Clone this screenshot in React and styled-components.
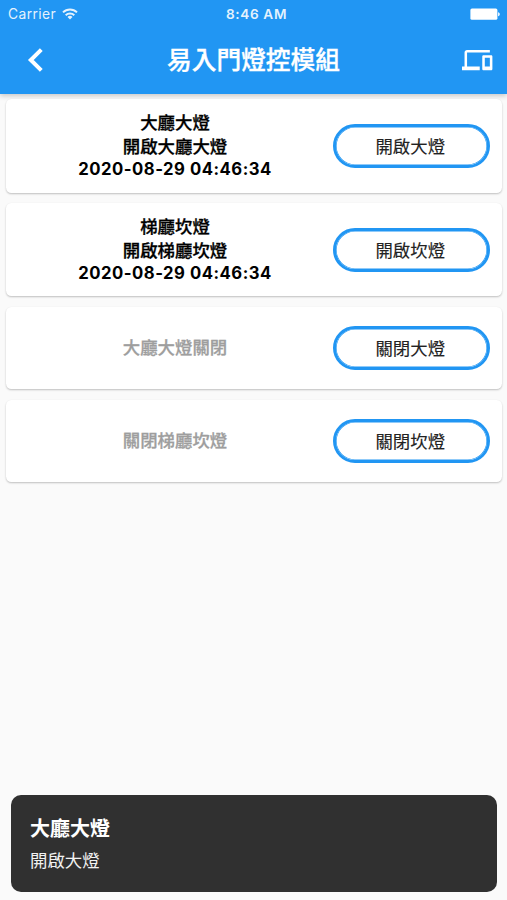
import * as React from "react";
import styled, { createGlobalStyle } from "styled-components";

const BLUE = "#2196f3";

const GlobalStyle = createGlobalStyle`
    body {
        margin: 0;
        background: #fafafa;
        font-family: Inter, "Noto Sans CJK TC", sans-serif;
    }
`;

const Screen = styled.div`
    display: flex;
    flex-direction: column;
    height: 900px;
    box-sizing: border-box;
    overflow: hidden;
`;

const Header = styled.header`
    flex: none;
    height: 93.5px;
    color: #fff;
    background: ${BLUE};
    box-shadow: 0 2px 5px rgba(0, 0, 0, 0.2);
`;

const StatusBar = styled.div`
    display: grid;
    grid-template-columns: 1fr auto 1fr;
    align-items: center;
    height: 27px;
    padding: 0 7px 0 8px;
`;

const Carrier = styled.div`
    display: flex;
    align-items: center;
    gap: 5.5px;
    font-size: 13.8px;
    letter-spacing: 0.4px;
    opacity: 0.88;
`;

const Clock = styled.div`
    margin-left: 5px;
    font-size: 13.6px;
    font-weight: 600;
    letter-spacing: 0.65px;
    opacity: 0.88;
`;

const BatterySlot = styled.div`
    display: flex;
    justify-content: flex-end;
`;

const NavBar = styled.div`
    display: grid;
    grid-template-columns: 60px 1fr 60px;
    align-items: center;
    height: 66px;
`;

const NavButton = styled.button`
    display: flex;
    justify-content: ${props => props.$end ? 'flex-end' : 'flex-start'};
    border: 0;
    padding: ${props => props.$end ? '0 14.5px 0 0' : '0 0 0 27px'};
    color: inherit;
    background: none;
`;

/*the CJK face has no medium weight, a thin stroke stands in for it*/
const Title = styled.h1`
    margin: 0;
    text-align: center;
    font-size: 24.7px;
    line-height: 34px;
    font-weight: 500;
    -webkit-text-stroke: 0.35px currentColor;
    white-space: nowrap;
`;

const List = styled.main`
    flex: 1;
    display: flex;
    flex-direction: column;
    gap: 10.4px;
    padding: 5.8px 5px 0 6px;
`;

const Card = styled.section`
    display: flex;
    align-items: center;
    gap: 5.5px;
    height: ${props => props.$tall ? '93.4px' : '82.4px'};
    box-sizing: border-box;
    padding: 0 12px 0 17px;
    border-radius: 5.4px;
    background: #fff;
    box-shadow: 0 1px 2px rgba(0, 0, 0, 0.24);
`;

const Info = styled.div`
    flex: 1;
    text-align: center;
    font-size: 17.4px;
    font-weight: 500;
    line-height: 24px;
    color: ${props => props.$muted ? '#9e9e9e' : '#000'};
    -webkit-text-stroke: 0.3px currentColor;
`;

const Stamp = styled.div`
    font-size: 16.7px;
    font-weight: 700;
    line-height: 21px;
    letter-spacing: 0.5px;
    -webkit-text-stroke: 0;
`;

const ActionButton = styled.button`
    flex: none;
    width: 157.5px;
    height: 44px;
    border: 3px solid ${BLUE};
    border-radius: 22px;
    padding: 0 2px 1px 0;
    font: inherit;
    font-size: 17.4px;
    color: #222;
    background: #fff;
    box-shadow: inset 0 0 0 0.6px ${BLUE};
    -webkit-text-stroke: 0.15px currentColor;
`;

const Toast = styled.div`
    flex: none;
    height: 97.5px;
    box-sizing: border-box;
    margin: 0 10px 8px 11px;
    padding: 20px 19px;
    border-radius: 10px;
    color: #fff;
    background: #303030;
`;

const ToastTitle = styled.div`
    font-size: 20px;
    line-height: 28px;
    font-weight: 700;
`;

const ToastText = styled.div`
    margin-top: 5px;
    font-size: 17.4px;
    line-height: 25px;
    color: #f2f2f2;
`;

const WifiIcon = () => (
    <svg width="16" height="12" viewBox="0 0 16 12" fill="none" stroke="#fff" strokeWidth="2">
        <path d="M1 4.4a10 10 0 0 1 14 0" />
        <path d="M3.7 7.2a6.1 6.1 0 0 1 8.6 0" />
        <path d="M8 11.6L5.5 9.1a3.5 3.5 0 0 1 5 0z" fill="#fff" stroke="none" />
    </svg>
);

const BatteryIcon = () => (
    <svg width="30" height="12" viewBox="0 0 30 12" fill="#fff">
        <rect x="0.4" y="0.4" width="27" height="11.4" rx="1.6" />
        <path d="M28.1 4.2c2.2.6 2.2 3.4 0 4z" />
    </svg>
);

const BackIcon = () => (
    <svg width="17" height="26" viewBox="0 0 17 26" fill="none" stroke="#fff" strokeWidth="4">
        <path d="M14.3 2.6L3.8 13l10.5 10.4" />
    </svg>
);

const DevicesIcon = () => (
    <svg width="30.4" height="30.4" viewBox="0 0 24 24" fill="#fff">
        <path d="M4 6h18V4H4c-1.1 0-2 .9-2 2v11H0v3h14v-3H4V6zm19 2h-6c-.55 0-1 .45-1 1v10c0 .55.45 1 1 1h6c.55 0 1-.45 1-1V9c0-.55-.45-1-1-1zm-1 9h-4v-7h4v7z" />
    </svg>
);

//lines is empty for modules that have not been triggered yet
const MODULES = [
    { title: "大廳大燈", lines: ["開啟大廳大燈"], stamp: "2020-08-29 04:46:34", action: "開啟大燈" },
    { title: "梯廳坎燈", lines: ["開啟梯廳坎燈"], stamp: "2020-08-29 04:46:34", action: "開啟坎燈" },
    { title: "大廳大燈關閉", lines: [], action: "關閉大燈" },
    { title: "關閉梯廳坎燈", lines: [], action: "關閉坎燈" },
];

const ModuleCard = ({ module }) => (
    <Card $tall={!!module.stamp}>
        <Info $muted={!module.stamp}>
            <div>{module.title}</div>
            {module.lines.map(line => <div key={line}>{line}</div>)}
            {module.stamp && <Stamp>{module.stamp}</Stamp>}
        </Info>
        <ActionButton>{module.action}</ActionButton>
    </Card>
);

const App = () => (
    <Screen>
        <GlobalStyle />
        <Header>
            <StatusBar>
                <Carrier>Carrier <WifiIcon /></Carrier>
                <Clock>8:46 AM</Clock>
                <BatterySlot><BatteryIcon /></BatterySlot>
            </StatusBar>
            <NavBar>
                <NavButton><BackIcon /></NavButton>
                <Title>易入門燈控模組</Title>
                <NavButton $end><DevicesIcon /></NavButton>
            </NavBar>
        </Header>
        <List>
            {MODULES.map(module => <ModuleCard key={module.title} module={module} />)}
        </List>
        <Toast>
            <ToastTitle>大廳大燈</ToastTitle>
            <ToastText>開啟大燈</ToastText>
        </Toast>
    </Screen>
);

export default App;
